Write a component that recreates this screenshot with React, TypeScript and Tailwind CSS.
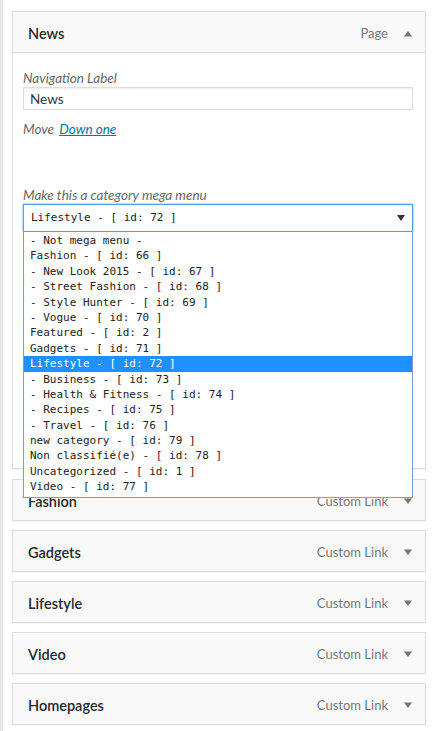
import React from "react";

const sans = { fontFamily: 'Lato, "Open Sans", sans-serif' };
const mono = { fontFamily: '"DejaVu Sans Mono", "Liberation Mono", monospace' };

function Tri({ up }: { up?: boolean }) {
  return (
    <svg width="10" height="7" viewBox="0 0 10 7" className="block">
      {up ? (
        <polygon points="1,6.5 9,6.5 5,1" fill="#72777c" />
      ) : (
        <polygon points="1,0.5 9,0.5 5,6" fill="#72777c" />
      )}
    </svg>
  );
}

const options = [
  "- Not mega menu -",
  "Fashion - [ id: 66 ]",
  "- New Look 2015 - [ id: 67 ]",
  "- Street Fashion - [ id: 68 ]",
  "- Style Hunter - [ id: 69 ]",
  "- Vogue - [ id: 70 ]",
  "Featured - [ id: 2 ]",
  "Gadgets - [ id: 71 ]",
  "Lifestyle - [ id: 72 ]",
  "- Business - [ id: 73 ]",
  "- Health & Fitness - [ id: 74 ]",
  "- Recipes - [ id: 75 ]",
  "- Travel - [ id: 76 ]",
  "new category - [ id: 79 ]",
  "Non classifié(e) - [ id: 78 ]",
  "Uncategorized - [ id: 1 ]",
  "Video - [ id: 77 ]",
];

function SmallPanel({ title, className }: { title: string; className?: string }) {
  return (
    <div
      className={
        "h-[42px] border border-[#dcdcdc] bg-[#f9f9f9] shadow-[0_1px_1px_rgba(0,0,0,0.04)] flex items-center pt-[3px] pl-[15px] pr-[12px] " +
        (className || "")
      }
    >
      <span className="text-[14.5px] font-semibold text-[#23282d] flex-1">{title}</span>
      <span className="text-[13px] text-[#72777c] mr-[15px]">Custom Link</span>
      <Tri />
    </div>
  );
}

export default function App() {
  return (
    <div className="w-[435px] h-[731px] bg-white flex overflow-hidden" style={sans}>
      <div className="w-[3px] bg-[#e8e8e8] shrink-0" />
      <div className="flex-1 pl-[9px] pr-[9px] pt-[11px]">
        <div className="border border-[#dcdcdc] shadow-[0_1px_1px_rgba(0,0,0,0.04)]">
          <div className="h-[41px] bg-[#f9f9f9] border-b border-[#dcdcdc] flex items-center pt-[3px] pl-[15px] pr-[12px]">
            <span className="text-[14.5px] font-semibold text-[#23282d] flex-1">News</span>
            <span className="text-[13px] text-[#72777c] mr-[15px]">Page</span>
            <Tri up />
          </div>
          <div className="h-[415px] bg-white pl-[10px] pr-[12px] pt-[16px]">
            <div className="text-[13.5px] italic text-[#666] leading-[18px]">Navigation Label</div>
            <div className="mt-[0px] h-[23px] border border-[#ddd] shadow-[inset_0_1px_2px_rgba(0,0,0,0.07)] flex items-center pl-[6px] pt-[1px] text-[13.5px] text-[#32373c]">
              News
            </div>
            <div className="mt-[10px] text-[13.5px] leading-[18px] italic text-[#666]">
              Move{" "}
              <span className="ml-[2px] text-[#0073aa] underline">
                Down one
              </span>
            </div>
            <div className="mt-[48px] text-[13.5px] leading-[18px] italic text-[#666]">
              Make this a category mega menu
            </div>
            <div className="relative">
              <div className="h-[28px] border border-[#5b9dd9] shadow-[0_0_2px_rgba(30,140,190,0.8)] flex items-center pl-[7px] pr-[7px] text-[11px] text-[#222]" style={mono}>
                <span className="flex-1">Lifestyle - [ id: 72 ]</span>
                <svg width="8" height="6" viewBox="0 0 8 6">
                  <polygon points="0,0 8,0 4,6" fill="#333" />
                </svg>
              </div>
              <div className="absolute left-0 right-0 top-full border border-[#7a9cd3] border-t-0 bg-white pt-[1px] pb-[2px] z-10" style={mono}>
                {options.map((o) => (
                  <div
                    key={o}
                    className={
                      "h-[15.4px] leading-[15.4px] pl-[6px] text-[11px] whitespace-pre " +
                      (o === "Lifestyle - [ id: 72 ]" ? "bg-[#1e90ff] text-white" : "text-[#222]")
                    }
                  >
                    {o}
                  </div>
                ))}
              </div>
            </div>
          </div>
        </div>
        <SmallPanel title="Fashion" className="mt-[10px]" />
        <SmallPanel title="Gadgets" className="mt-[9px]" />
        <SmallPanel title="Lifestyle" className="mt-[9px]" />
        <SmallPanel title="Video" className="mt-[9px]" />
        <SmallPanel title="Homepages" className="mt-[9px]" />
      </div>
    </div>
  );
}
